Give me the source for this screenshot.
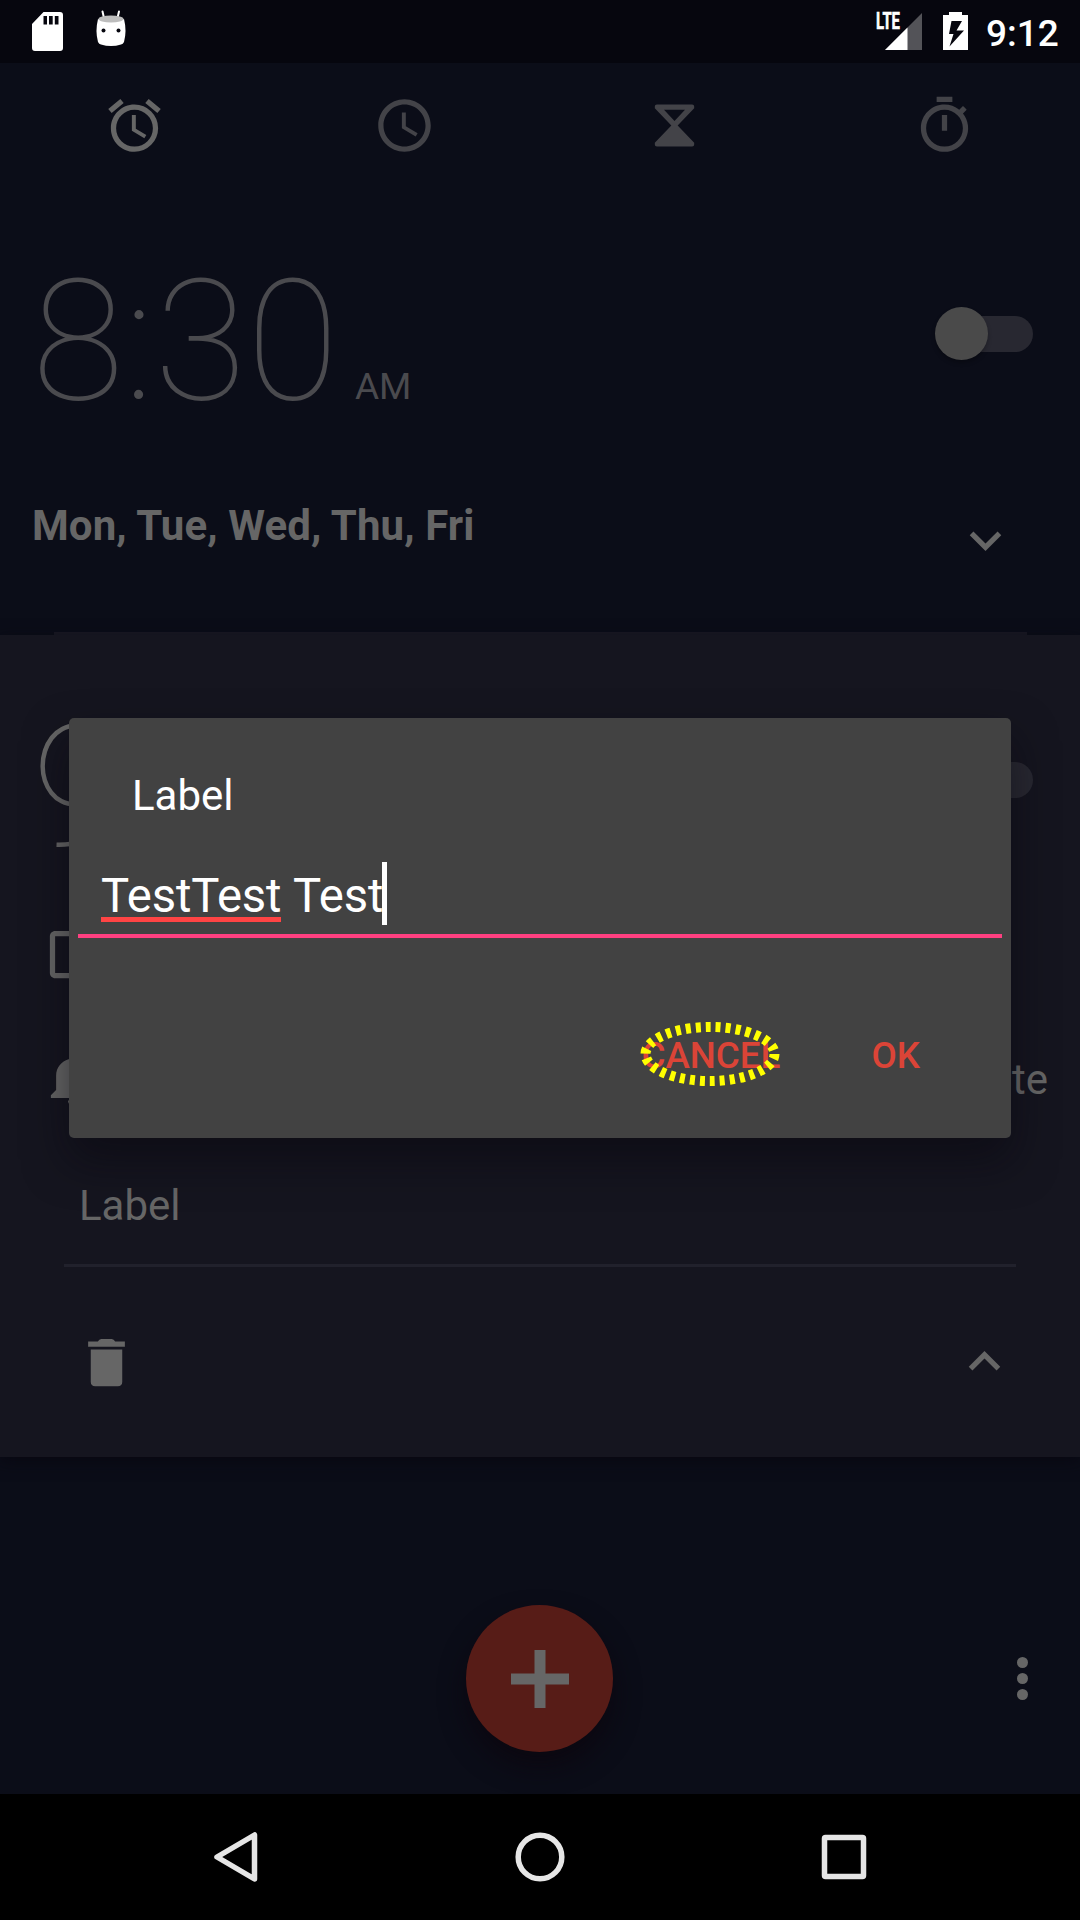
<script>
  const alarms = [
    { time: '8:30', period: 'AM' },
    { time: '9:00' }
  ];
</script>

<div class="screen">
  <header class="status">
    <svg class="sd" viewBox="0 0 31 39"><path fill-rule="evenodd" d="M11.5 0H28q3 0 3 3V36q0 3-3 3H3q-3 0-3-3V12ZM11.5 4V12.5H15V4ZM17 4V12.5H20.700V4ZM22.800 4V12.500H26.500V4Z" fill="#fff" /></svg>
    <svg class="droid" viewBox="0 0 32 38">
      <path d="M7.500 1.500L9 8M24 1.500L22.500 8" stroke="#fff" stroke-width="2" stroke-linecap="round" />
      <path d="M3 9Q0 21 3 32Q4 34 6 34.500Q16 37.500 26 34.500Q28 34 29 32Q32 21 29 9Q16 14 3 9Z" fill="#fff" />
      <ellipse cx="16" cy="9" rx="12.500" ry="3.400" fill="#bdbdbd" />
      <circle cx="8.500" cy="20.500" r="2" fill="#06060e" /><circle cx="23.500" cy="20.500" r="2" fill="#06060e" />
    </svg>
    <div class="spacer"></div>
    <svg class="signal" viewBox="0 0 47 39">
      <text x="0" y="17.300" textLength="24" lengthAdjust="spacingAndGlyphs" font-family="Roboto" font-weight="700" font-size="23" fill="#fff" stroke="#fff" stroke-width=".6">LTE</text>
      <path d="M9 38L46 1V38Z" fill="#535358" />
      <path d="M9 38L31.500 15.500V38Z" fill="#fff" />
    </svg>
    <svg class="battery" viewBox="0 0 25 38"><path fill-rule="evenodd" d="M6 0H19V3H25V38H0V3H6ZM8.500 9L6 22H10.500L6.500 34.500L21 18.500H13.500L19 9Z" fill="#fff" /></svg>
    <span class="clock">9:12</span>
  </header>

  <nav class="tabs">
    <div class="tab on"><svg viewBox="0 0 24 24"><path d="M22 5.720l-4.600-3.860-1.290 1.530 4.600 3.860L22 5.720zM7.880 3.390L6.600 1.860 2 5.710l1.290 1.530 4.590-3.850zM12.500 8H11v6l4.750 2.850.75-1.230-4-2.370V8zM12 4c-4.970 0-9 4.030-9 9s4.020 9 9 9a9 9 0 0 0 0-18zm0 16c-3.870 0-7-3.130-7-7s3.130-7 7-7 7 3.130 7 7-3.130 7-7 7z" /></svg></div>
    <div class="tab"><svg viewBox="0 0 24 24"><path d="M11.990 2C6.470 2 2 6.480 2 12s4.470 10 9.990 10C17.520 22 22 17.520 22 12S17.520 2 11.990 2zM12 20c-4.420 0-8-3.580-8-8s3.580-8 8-8 8 3.580 8 8-3.580 8-8 8zM12.500 7H11v6l5.250 3.150.75-1.230-4.500-2.670z" /></svg></div>
    <div class="tab"><svg viewBox="0 0 24 24"><path fill-rule="evenodd" d="M5.300 4H18.700Q19.500 4 19.500 4.800V5.400L13.200 12L19.500 18.600V19.200Q19.500 20 18.700 20H5.300Q4.500 20 4.500 19.200V18.600L10.800 12L4.500 5.400V4.800Q4.500 4 5.300 4ZM8 6L12 10.300L16 6Z" /></svg></div>
    <div class="tab"><svg viewBox="0 0 24 24"><path d="M15 1H9v2h6V1zm-4 13h2V8h-2v6zm8.030-6.610l1.420-1.420c-.43-.51-.9-.99-1.410-1.410l-1.420 1.420A8.962 8.962 0 0 0 12 4c-4.970 0-9 4.030-9 9s4.020 9 9 9a8.994 8.994 0 0 0 7.030-14.610zM12 20c-3.870 0-7-3.130-7-7s3.130-7 7-7 7 3.130 7 7-3.130 7-7 7z" /></svg></div>
  </nav>

  <section class="alarm">
    <div class="timerow">
      <span class="time">{alarms[0].time}</span><span class="period">{alarms[0].period}</span>
      <div class="switch"><i></i></div>
    </div>
    <div class="daysrow">
      <span class="days">Mon, Tue, Wed, Thu, Fri</span>
      <svg class="chev" viewBox="0 0 24 24"><path d="M16.590 8.590L12 13.170 7.410 8.590 6 10l6 6 6-6z" /></svg>
    </div>
  </section>
  <hr class="line" />

  <section class="alarm open">
    <div class="timerow">
      <span class="time">{alarms[1].time}</span>
      <div class="switch"><i></i></div>
    </div>
    <div class="repeat">
      <svg viewBox="0 0 24 24"><path d="M19 5v14H5V5h14m0-2H5c-1.100 0-2 .9-2 2v14c0 1.100.9 2 2 2h14c1.100 0 2-.9 2-2V5c0-1.100-.9-2-2-2z" /></svg>
    </div>
    <div class="ring">
      <svg viewBox="0 0 24 24"><path d="M11.500 22c1.100 0 2-.9 2-2h-4c0 1.100.9 2 2 2zm6.500-6v-5.500c0-3.070-2.130-5.640-5-6.320V3.500c0-.83-.67-1.500-1.500-1.500S10 2.670 10 3.500v.68c-2.870.68-5 3.250-5 6.320V16l-2 2v1h17v-1l-2-2z" /></svg>
      <span>Vibrate</span>
    </div>
    <div class="label">Label</div>
    <hr class="inner" />
    <div class="tools">
      <svg viewBox="0 0 24 24"><path d="M6 7H18V19.300Q18 21 16.300 21H7.700Q6 21 6 19.300ZM5 4H8.700Q9.200 3 10 3H14Q14.800 3 15.300 4H19V6H5Z" /></svg>
      <svg class="up" viewBox="0 0 24 24"><path d="M12 8l-6 6 1.410 1.410L12 10.830l4.590 4.580L18 14z" /></svg>
    </div>
  </section>

  <footer class="actions">
    <div></div>
    <div class="fab"><svg viewBox="0 0 58 58"><path d="M23.500 0H34.500V23.500H58V34.500H34.500V58H23.500V34.500H0V23.500H23.500Z" fill="#666" /></svg></div>
    <div class="more"><i></i><i></i><i></i></div>
  </footer>

  <nav class="system">
    <svg viewBox="0 0 54 54"><path d="M45.500 5V49L8 27Z" /></svg>
    <svg viewBox="0 0 54 54"><circle cx="27" cy="27" r="21.800" /></svg>
    <svg viewBox="0 0 54 54"><rect x="7.500" y="7.500" width="39" height="39" rx="1" /></svg>
  </nav>

  <div class="dialog">
    <div class="title">Label</div>
    <div class="field"><span class="typo">TestTest</span><span class="word">&nbsp;Test</span><i class="caret"></i></div>
    <div class="buttons">
      <span class="cancel">CANCEL
        <svg class="ring-mark" viewBox="0 0 140 66"><ellipse cx="70" cy="33" rx="64.500" ry="27" /></svg>
      </span>
      <span class="ok">OK</span>
    </div>
  </div>
</div>

<style>
  :global(body) { background: #000; }
  .screen { position: relative; width: 1080px; height: 1920px; overflow: hidden; display: flex; flex-direction: column; background: #0b0d18; color: #666; font-family: Roboto, sans-serif; font-size: 42px; line-height: 50px; }
  .screen * { box-sizing: border-box; }
  svg { display: block; flex: none; fill: #666; }
  hr { border: 0; flex: none; }
  .status { height: 63px; flex: none; display: flex; align-items: flex-start; background: #06060e; padding: 12px 21px 0 32px; }
  .sd { width: 31px; height: 39px; }
  .droid { width: 32px; height: 38px; margin: -2px 0 0 32px; }
  .spacer { flex: 1; }
  .signal { width: 47px; height: 39px; overflow: visible; }
  .battery { width: 25px; height: 38px; margin: 0 18px 0 20px; }
  .clock { color: #fff; font-size: 37px; font-weight: 500; line-height: 44px; width: 73px; white-space: nowrap; }
  .tabs { height: 126px; flex: none; display: grid; grid-template-columns: repeat(4, 1fr); align-items: center; justify-items: center; padding-bottom: 2px; }
  .tabs svg { width: 63px; height: 63px; margin-right: 2px; fill: #434348; }
  .tabs .on svg { fill: #666; }

  .alarm { height: 443px; flex: none; padding-top: 69px; }
  .timerow { display: flex; align-items: baseline; height: 168px; padding: 0 47px 0 32px; color: #4a4a4e; }
  .time { font-size: 168px; line-height: 168px; font-weight: 100; letter-spacing: .3px; }
  .period { font-size: 37px; line-height: 44px; margin-left: 16px; }
  .switch { align-self: flex-start; margin: 58px 0 0 auto; width: 89px; height: 36px; border-radius: 18px; background: #282831; display: flex; align-items: center; }
  .switch i { flex: none; width: 53px; height: 53px; margin: -1px 0 0 -9px; border-radius: 50%; background: #4a4a4a; box-shadow: 0 3px 4px rgba(0, 0, 0, .25); }
  .daysrow { display: flex; justify-content: space-between; padding: 75px 63px 0 32px; }
  .days { font-weight: 700; letter-spacing: .1px; }
  .chev { width: 63px; height: 63px; margin-top: 8px; }
  .line { width: 973px; height: 3px; margin: 0 0 0 54px; background: #191924; }

  .open { height: 822px; background: #15151f; box-shadow: 0 4px 14px rgba(8, 6, 16, .8); }
  .open .timerow { color: #666; }
  .repeat { display: flex; height: 63px; padding-left: 42px; margin-top: 51px; }
  .repeat svg, .ring svg, .tools svg { width: 63px; height: 63px; }
  .ring { display: flex; justify-content: space-between; height: 63px; padding: 0 32px 0 43px; margin-top: 62px; }
  .ring span { margin-top: 7px; }
  .label { margin: 70px 0 0 79px; }
  .inner { width: 952px; height: 3px; margin: 33px 0 0 64px; background: #21212c; }
  .tools { display: flex; justify-content: space-between; padding: 64px 64px 0 75px; }
  .tools .up { margin-top: -1px; }

  .actions { flex: 1; display: grid; grid-template-columns: 1fr 147px 1fr; align-items: start; padding: 148px 52px 0 51px; }
  .fab { width: 147px; height: 147px; border-radius: 50%; background: #571c17; display: grid; place-items: center; box-shadow: 0 14px 26px rgba(12, 6, 14, .75); }
  .fab svg { width: 58px; height: 58px; }
  .more { justify-self: end; display: grid; gap: 5px; padding-top: 52px; }
  .more i { width: 11px; height: 11px; border-radius: 50%; background: #666; }

  .system { height: 126px; flex: none; background: #000; display: flex; justify-content: space-between; align-items: center; padding: 0 209px; }
  .system svg { width: 54px; height: 54px; fill: none; stroke: #e6e6e6; stroke-width: 5.500; stroke-linejoin: round; }

  .dialog { position: absolute; left: 69px; top: 718px; width: 942px; height: 420px; border-radius: 5px; background: #424242; color: #fff; padding: 53px 9px 0; box-shadow: 0 22px 44px rgba(8, 6, 14, .5); }
  .title { padding-left: 54px; }
  .field { display: flex; align-items: flex-start; height: 117px; padding: 44px 0 0 23px; border-bottom: 4px solid #ff4081; font-size: 47.250px; line-height: 63px; letter-spacing: -.15px; }
  .typo { height: 57px; border-bottom: 5px solid #ff4444; }
  .caret { width: 5px; height: 63px; margin: -3px 0 0 -1px; background: #fff; }
  .buttons { display: flex; justify-content: flex-end; gap: 91px; padding: 96px 82px 0 0; color: #db4437; font-size: 36.750px; font-weight: 500; line-height: 44px; }
  .cancel { position: relative; }
  .ring-mark { position: absolute; left: -1px; top: -13px; width: 140px; height: 66px; fill: none; stroke: #ff0; stroke-width: 10; stroke-dasharray: 5 5; }
</style>
